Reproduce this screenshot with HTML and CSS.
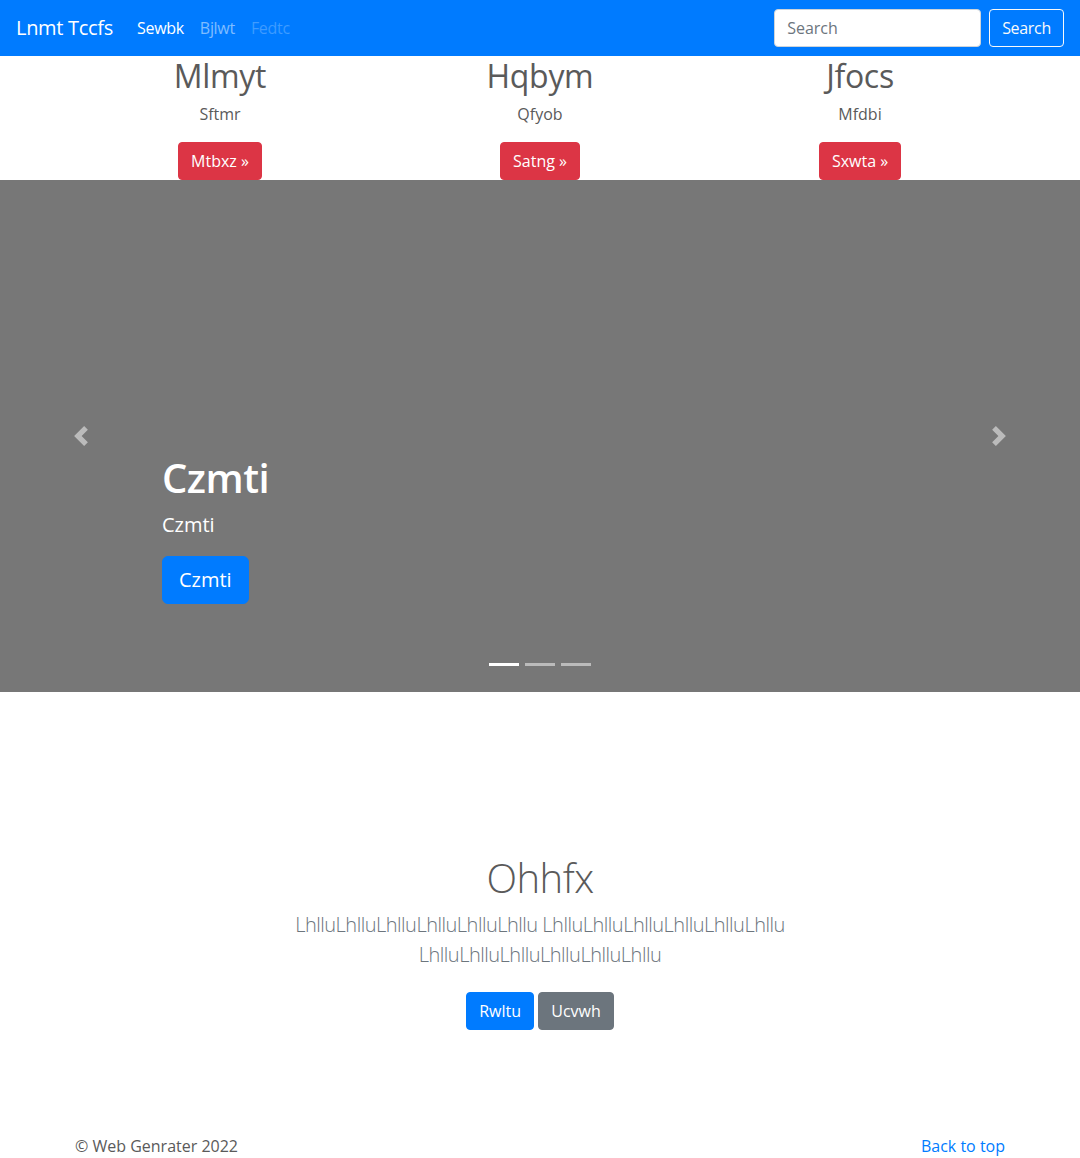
FILE: index.html
```html
<!DOCTYPE html>
<html lang="en">
<head>
<meta charset="utf-8">
<title>Lnmt Tccfs</title>
<link rel="stylesheet" href="styles.css">
</head>
<body>
<nav class="navbar">
  <a class="brand" href="#">Lnmt Tccfs</a>
  <ul class="nav">
    <li><a class="nav-link active" href="#">Sewbk</a></li>
    <li><a class="nav-link" href="#">Bjlwt</a></li>
    <li><a class="nav-link disabled" href="#">Fedtc</a></li>
  </ul>
  <form class="search">
    <input class="search-input" type="text" placeholder="Search">
    <button class="btn btn-outline-light" type="button">Search</button>
  </form>
</nav>

<div class="container marketing">
  <div class="row">
    <div class="col">
      <h2>Mlmyt</h2>
      <p>Sftmr</p>
      <p class="btn-line"><a class="btn btn-danger" href="#">Mtbxz »</a></p>
    </div>
    <div class="col">
      <h2>Hqbym</h2>
      <p>Qfyob</p>
      <p class="btn-line"><a class="btn btn-danger" href="#">Satng »</a></p>
    </div>
    <div class="col">
      <h2>Jfocs</h2>
      <p>Mfdbi</p>
      <p class="btn-line"><a class="btn btn-danger" href="#">Sxwta »</a></p>
    </div>
  </div>
</div>

<div class="carousel">
  <a class="control control-prev" href="#">
    <svg class="control-icon" viewBox="0 0 8 8" width="20" height="20"><path fill="#fff" d="M5.25 0l-4 4 4 4 1.5-1.5L4.25 4l2.5-2.5L5.25 0z"/></svg>
  </a>
  <div class="caption">
    <h1>Czmti</h1>
    <p>Czmti</p>
    <p><a class="btn btn-lg btn-primary" href="#">Czmti</a></p>
  </div>
  <a class="control control-next" href="#">
    <svg class="control-icon" viewBox="0 0 8 8" width="20" height="20"><path fill="#fff" d="M2.75 0l-1.5 1.5L3.75 4l-2.5 2.5L2.75 8l4-4-4-4z"/></svg>
  </a>
  <ol class="indicators">
    <li class="active"></li>
    <li></li>
    <li></li>
  </ol>
</div>

<section class="jumbo">
  <div class="jumbo-inner">
    <h1 class="jumbo-heading">Ohhfx</h1>
    <p class="lead">LhlluLhlluLhlluLhlluLhlluLhllu LhlluLhlluLhlluLhlluLhlluLhllu LhlluLhlluLhlluLhlluLhlluLhllu</p>
    <p class="jumbo-btns">
      <a class="btn btn-primary" href="#">Rwltu</a>
      <a class="btn btn-secondary" href="#">Ucvwh</a>
    </p>
  </div>
</section>

<footer class="container footer">
  <p class="copy">© Web Genrater 2022</p>
  <a class="top-link" href="#">Back to top</a>
</footer>
</body>
</html>
```

FILE: styles.css
```css
* { box-sizing: border-box; }
html, body { margin: 0; padding: 0; }
body {
  font-family: "Open Sans", "Noto Sans", "Liberation Sans", sans-serif;
  font-size: 16px;
  line-height: 1.5;
  color: #5a5a5a;
  background: #fff;
}
a { text-decoration: none; }
p { margin: 0 0 16px; }
h1, h2 { margin: 0 0 8px; line-height: 1.2; }

/* navbar */
.navbar {
  display: flex;
  align-items: center;
  height: 56px;
  padding: 8px 16px;
  background: #007bff;
}
.brand {
  color: #fff;
  font-size: 20px;
  line-height: 30px;
  padding: 5px 0;
  margin-right: 16px;
  letter-spacing: -0.3px;
}
.nav {
  display: flex;
  list-style: none;
  margin: 0;
  padding: 0;
}
.nav-link {
  display: block;
  padding: 8px 8px;
  color: rgba(255,255,255,.5);
  letter-spacing: -0.3px;
}
.nav-link.active { color: #fff; }
.nav-link.disabled { color: rgba(255,255,255,.25); }
.search {
  margin-left: auto;
  display: flex;
  align-items: center;
}
.search-input {
  width: 207px;
  height: 38px;
  padding: 6px 12px;
  font: inherit;
  color: #495057;
  border: 1px solid #ced4da;
  border-radius: 4px;
  margin-right: 8px;
  background: #fff;
}
.search-input::placeholder { color: #6c757d; }

/* buttons */
.btn {
  display: inline-block;
  font: inherit;
  font-size: 16px;
  line-height: 24px;
  padding: 6px 12px;
  border: 1px solid transparent;
  border-radius: 4px;
  color: #fff;
  cursor: pointer;
}
.btn-outline-light { background: transparent; border-color: #f8f9fa; color: #f8f9fa; letter-spacing: -0.3px; }
.btn-danger { background: #dc3545; border-color: #dc3545; }
.btn-primary { background: #007bff; border-color: #007bff; }
.btn-secondary { background: #6c757d; border-color: #6c757d; }
.btn-lg { font-size: 20px; line-height: 30px; padding: 8px 16px; border-radius: 6px; }

/* marketing */
.container {
  width: 960px;
  margin: 0 auto;
  padding: 0 15px;
}
.row { display: flex; margin: 0 -15px; }
.col { flex: 1; padding: 0 15px; text-align: center; }
.marketing h2 { font-size: 32px; font-weight: 500; margin-bottom: 8px; padding-top: 2px; line-height: 36px; letter-spacing: -0.3px; }
.marketing .btn-line { margin-bottom: 0; }

/* carousel */
.carousel {
  position: relative;
  height: 512px;
  background: #777;
  display: flex;
  align-items: flex-end;
}
.caption {
  flex: 1;
  padding: 0 0 40px;
  margin: 0 162px 48px;
  color: #fff;
  text-align: left;
}
.caption h1 { font-size: 40px; font-weight: 600; line-height: 48px; letter-spacing: -0.5px; }
.caption p { font-size: 20px; line-height: 30px; margin-bottom: 16px; }
.caption p:last-child { margin-bottom: 0; }
.control {
  position: absolute;
  top: 0;
  bottom: 0;
  width: 162px;
  display: flex;
  align-items: center;
  justify-content: center;
  opacity: .5;
}
.control-prev { left: 0; }
.control-next { right: 0; }
.control-icon { display: block; }
.indicators {
  position: absolute;
  left: 0;
  right: 0;
  bottom: 0;
  margin: 0 0 16px;
  padding: 0;
  list-style: none;
  display: flex;
  justify-content: center;
}
.indicators li {
  width: 30px;
  height: 3px;
  margin: 10px 3px;
  background: #fff;
  opacity: .5;
}
.indicators li.active { opacity: 1; }

/* jumbotron section */
.jumbo {
  padding: 162px 0 80px;
  text-align: center;
}
.jumbo-inner {
  max-width: 640px;
  margin: 0 auto;
}
.jumbo-heading {
  font-size: 40px;
  font-weight: 300;
  line-height: 48px;
  margin-bottom: 8px;
  letter-spacing: -0.5px;
}
.lead {
  font-size: 20px;
  font-weight: 300;
  line-height: 30px;
  color: #6c757d;
  margin-bottom: 16px;
  letter-spacing: -0.5px;
}
.jumbo-btns { margin: 0; }
.jumbo-btns .btn { margin: 6px 0; }

/* footer */
.footer {
  display: flex;
  justify-content: space-between;
  align-items: center;
  padding-top: 18px;
}
.copy { margin: 0; }
.top-link { color: #007bff; }
```
